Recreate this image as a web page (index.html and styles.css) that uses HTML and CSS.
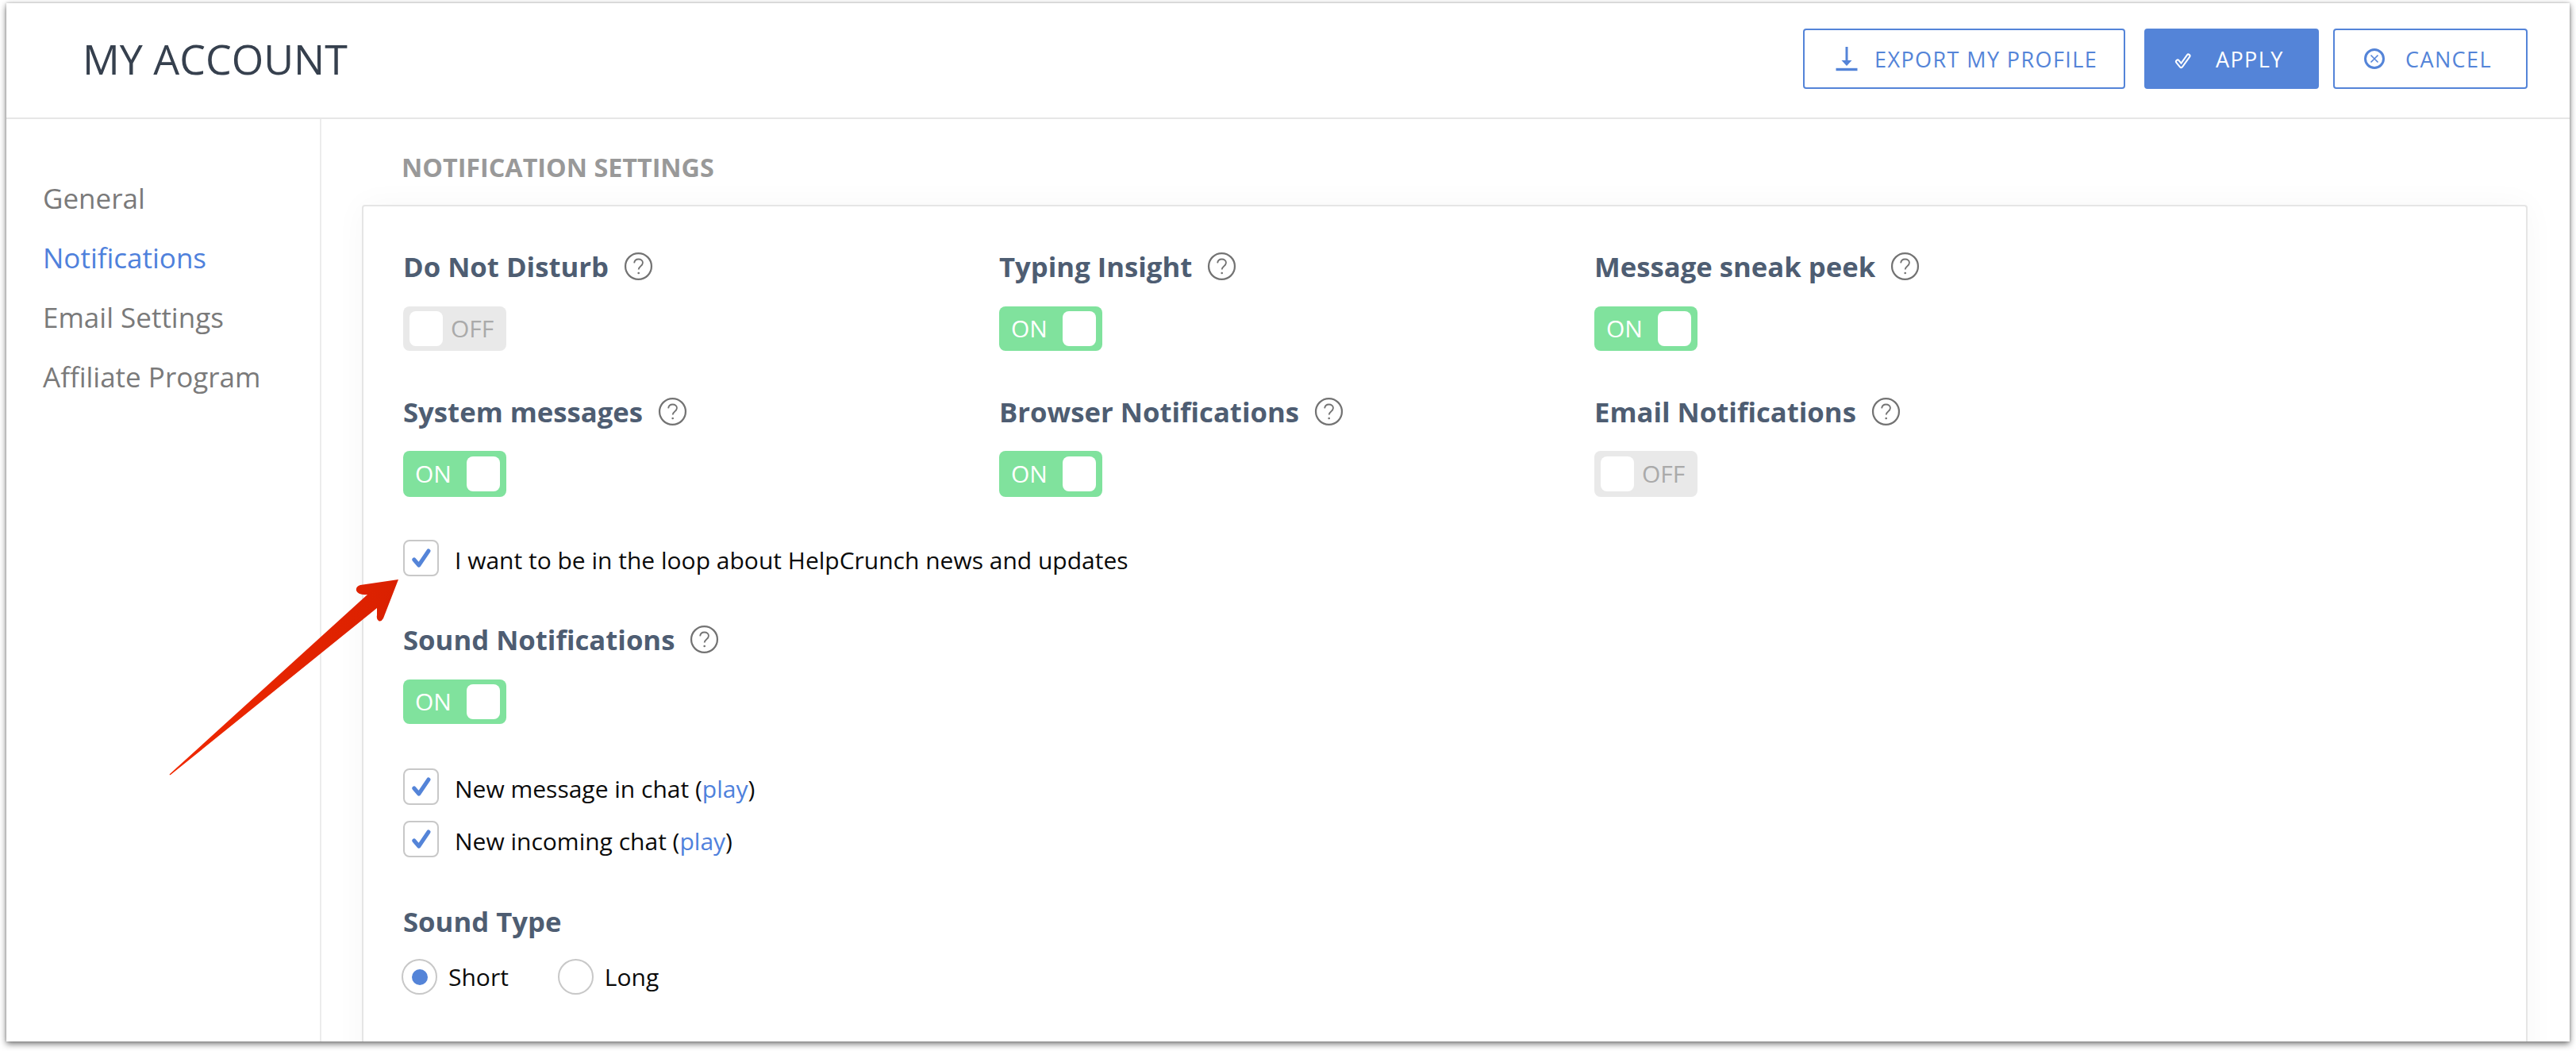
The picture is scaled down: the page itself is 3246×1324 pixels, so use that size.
FILE: index.html
```html
<!DOCTYPE html>
<html lang="en">
<head>
<meta charset="utf-8">
<title>My Account</title>
<link rel="stylesheet" href="styles.css">
</head>
<body>
<svg width="0" height="0" class="defs">
  <symbol id="help" viewBox="0 0 36 36">
    <circle cx="18" cy="18" r="16" fill="none" stroke="#737373" stroke-width="2.200"/>
    <path d="M12.800 14c.3-3 2.400-4.800 5.300-4.800s5.200 1.800 5.200 4.500c0 2-1.200 3.100-2.700 4.200-1.600 1.200-2.400 2-2.400 4" fill="none" stroke="#737373" stroke-width="1.800"/>
    <circle cx="18.200" cy="26.300" r="1.300" fill="#737373"/>
  </symbol>
  <symbol id="tick" viewBox="0 0 24 24">
    <path d="M2.800 14 8.800 21 21 3" fill="none" stroke="#5484d8" stroke-width="5" stroke-linecap="round" stroke-linejoin="round"/>
  </symbol>
</svg>
<div class="window">
  <header class="topbar">
    <h1 class="title">MY ACCOUNT</h1>
    <div class="actions">
      <button class="btn btn-export">
        <svg class="ico" width="28" height="32" viewBox="0 0 28 32"><path d="M14 1V20" stroke="#5484d8" stroke-width="3" fill="none"/><path d="M7.500 18H20.500L14 25Z" fill="#5484d8"/><path d="M0.500 29.500H27.500" stroke="#5484d8" stroke-width="3.400" fill="none"/></svg>
        <span>EXPORT MY PROFILE</span>
      </button>
      <button class="btn btn-apply">
        <svg class="ico ico-check" width="22" height="22" viewBox="0 0 22 22"><path d="M4 11.500 8.500 17 17.500 4.500" fill="none" stroke="#fff" stroke-width="6" stroke-linecap="round" stroke-linejoin="round"/><path d="M4 11.500 8.500 17 17.500 4.500" fill="none" stroke="#5484d8" stroke-width="2" stroke-linecap="round" stroke-linejoin="round"/></svg>
        <span>APPLY</span>
      </button>
      <button class="btn btn-cancel">
        <svg class="ico" width="28" height="28" viewBox="0 0 28 28"><circle cx="14" cy="14" r="11.500" fill="none" stroke="#5484d8" stroke-width="3"/><path d="M9.500 9.500 18.500 18.500M18.500 9.500 9.500 18.500" stroke="#5484d8" stroke-width="1.600" fill="none"/></svg>
        <span>CANCEL</span>
      </button>
    </div>
  </header>
  <div class="body">
    <nav class="side">
      <a class="nav-item">General</a>
      <a class="nav-item is-active">Notifications</a>
      <a class="nav-item">Email Settings</a>
      <a class="nav-item">Affiliate Program</a>
    </nav>
    <main class="main">
      <h2 class="section-title">NOTIFICATION SETTINGS</h2>
      <section class="card">
        <div class="grid">
          <div class="setting">
            <div class="label">Do Not Disturb<svg class="help"><use href="#help"/></svg></div>
            <div class="toggle off"><i class="knob"></i><span>OFF</span></div>
          </div>
          <div class="setting">
            <div class="label">Typing Insight<svg class="help"><use href="#help"/></svg></div>
            <div class="toggle on"><span>ON</span><i class="knob"></i></div>
          </div>
          <div class="setting">
            <div class="label">Message sneak peek<svg class="help"><use href="#help"/></svg></div>
            <div class="toggle on"><span>ON</span><i class="knob"></i></div>
          </div>
          <div class="setting">
            <div class="label">System messages<svg class="help"><use href="#help"/></svg></div>
            <div class="toggle on tall"><span>ON</span><i class="knob"></i></div>
          </div>
          <div class="setting">
            <div class="label">Browser Notifications<svg class="help"><use href="#help"/></svg></div>
            <div class="toggle on tall"><span>ON</span><i class="knob"></i></div>
          </div>
          <div class="setting">
            <div class="label">Email Notifications<svg class="help"><use href="#help"/></svg></div>
            <div class="toggle off tall"><i class="knob"></i><span>OFF</span></div>
          </div>
        </div>
        <div class="check-row loop"><span class="box"><svg class="tick"><use href="#tick"/></svg></span><span class="check-text">I want to be in the loop about HelpCrunch news and updates</span></div>
        <div class="label sound">Sound Notifications<svg class="help"><use href="#help"/></svg></div>
        <div class="toggle on"><span>ON</span><i class="knob"></i></div>
        <div class="check-row msg"><span class="box"><svg class="tick"><use href="#tick"/></svg></span><span class="check-text">New message in chat (<a class="play">play</a>)</span></div>
        <div class="check-row inc"><span class="box"><svg class="tick"><use href="#tick"/></svg></span><span class="check-text">New incoming chat (<a class="play">play</a>)</span></div>
        <div class="label type">Sound Type</div>
        <div class="radios">
          <div class="radio-item"><span class="radio is-on"></span>Short</div>
          <div class="radio-item"><span class="radio"></span>Long</div>
        </div>
      </section>
    </main>
  </div>
</div>
<svg class="arrow" width="300" height="260" viewBox="0 0 300 260">
  <defs>
    <linearGradient id="red" x1="0" y1="0" x2="1" y2="0.15">
      <stop offset="0" stop-color="#f42a00"/>
      <stop offset="1" stop-color="#d92000"/>
    </linearGradient>
  </defs>
  <path d="M3 246 L252 20 Q240 21 238 15 Q237 10 243 8 L291 1 L272 50 Q269 55 266 53 Q263 51 264 46 L264 37 L4 247 Q2 248 3 246Z" fill="url(#red)"/>
</svg>
</body>
</html>
```

FILE: styles.css
```css
* { box-sizing: border-box; }
html, body { margin: 0; padding: 0; }
body {
  width: 3246px;
  height: 1324px;
  padding: 4px 8px 12px;
  background: #fff;
  font-family: "Open Sans", "Noto Sans", sans-serif;
  overflow: hidden;
  position: relative;
}
.defs { position: absolute; }
.window {
  width: 3230px;
  height: 1308px;
  background: #fff;
  box-shadow: 0 3px 8px rgba(0, 0, 0, .55), 0 0 3px rgba(0, 0, 0, .2);
  display: flex;
  flex-direction: column;
  overflow: hidden;
}
.topbar {
  height: 146px;
  flex: none;
  border-bottom: 2px solid #e6e6e6;
  display: flex;
  align-items: flex-start;
  justify-content: space-between;
  padding: 32px 53px 0 96px;
}
.title {
  margin: 8px 0 0;
  font-size: 52px;
  line-height: 60px;
  font-weight: 400;
  color: #36404e;
}
.actions { display: flex; }
.btn {
  height: 76px;
  border: 2px solid #5484d8;
  border-radius: 4px;
  background: #fff;
  color: #5484d8;
  font: 400 27px "Open Sans", sans-serif;
  letter-spacing: 1.4px;
  display: flex;
  align-items: center;
  padding: 0;
}
.btn-export { width: 406px; padding-left: 39px; gap: 21px; margin-right: 24px; }
.btn-apply { width: 220px; padding-left: 36px; gap: 30px; margin-right: 18px; background: #5484d8; color: #fff; }
.btn-cancel { width: 245px; padding-left: 36px; gap: 25px; }
.ico { flex: none; }
.ico-check { margin-top: 5px; }
.body { flex: 1; display: flex; min-height: 0; }
.side {
  width: 397px;
  flex: none;
  border-right: 2px solid #ececec;
  padding-top: 76px;
  display: flex;
  flex-direction: column;
  gap: 28px;
}
.nav-item {
  margin-left: 46px;
  font-size: 35px;
  line-height: 47px;
  color: #7a7a7a;
}
.nav-item.is-active { color: #4f81dc; }
.main { flex: 1; min-width: 0; padding: 0 53px 0 51px; }
.section-title {
  margin: 40px 0 28px 50px;
  font-size: 32.3px;
  line-height: 40px;
  font-weight: 700;
  color: #999;
}
.card {
  border: 2px solid #e5e5e5;
  border-bottom: 0;
  border-radius: 4px 4px 0 0;
  background: #fff;
  box-shadow: 0 0 40px rgba(0, 0, 0, .035);
  padding: 50px 0 0 50px;
  height: 1100px;
}
.grid {
  display: grid;
  grid-template-columns: 751px 750px 751px;
  grid-template-rows: 183px 133px;
}
.label {
  display: flex;
  align-items: center;
  gap: 19px;
  height: 50px;
  font-size: 34.700px;
  font-weight: 700;
  color: #4e5d72;
}
.help { width: 37px; height: 37px; flex: none; }
.toggle {
  width: 130px;
  height: 56px;
  margin-top: 26px;
  border-radius: 8px;
  display: flex;
  align-items: center;
  font-size: 30px;
  padding: 0 8px;
  line-height: 40px;
}
.toggle.tall { height: 58px; margin-top: 25px; }
.toggle.on { background: #80e29d; color: #fff; justify-content: space-between; padding-left: 15px; padding-right: 8px; }
.toggle.off { background: #e9e9e9; color: #aaa; gap: 10px; }
.knob { width: 42px; height: 44px; background: #fff; border-radius: 8px; flex: none; }
.check-row {
  display: flex;
  align-items: center;
  height: 46px;
  font-size: 30px;
  color: #0a0a0a;
}
.check-text { padding-top: 5px; }
.box {
  width: 45px;
  height: 46px;
  border: 2px solid #c8c8c8;
  border-radius: 8px;
  background: #fff;
  margin-right: 20px;
  display: flex;
  align-items: center;
  justify-content: center;
  flex: none;
}
.tick { width: 24px; height: 24px; }
.loop { margin-top: 54px; }
.sound { margin-top: 54px; }
.msg { margin-top: 56px; }
.inc { margin-top: 20px; }
.play { color: #4f81dc; }
.type { margin-top: 55px; }
.radios { display: flex; margin-top: 23px; margin-left: -2px; }
.radio-item { display: flex; align-items: center; font-size: 30px; color: #0a0a0a; margin-right: 62px; }
.radio {
  width: 45px;
  height: 45px;
  border: 2px solid #c8c8c8;
  border-radius: 50%;
  margin-right: 14px;
  display: flex;
  align-items: center;
  justify-content: center;
}
.radio.is-on::after { content: ""; width: 20px; height: 20px; border-radius: 50%; background: #5484d8; }
.arrow { position: absolute; left: 211px; top: 729px; }
```
